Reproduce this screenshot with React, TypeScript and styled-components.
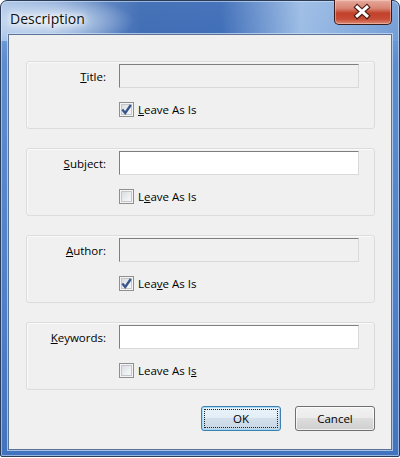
import React from 'react';
import styled, { createGlobalStyle } from 'styled-components';

const GlobalStyle = createGlobalStyle`
    html, body {
        margin: 0;
        padding: 0;
        background: #ffffff;
    }
    body {
        font-family: "Open Sans", "Noto Sans", "DejaVu Sans", sans-serif;
    }
`;

type Field = {
    label: string;
    labelKey: number;
    disabled: boolean;
    checked: boolean;
    leaveKey: number;
};

const fields: Field[] = [
    { label: 'Title:', labelKey: 0, disabled: true, checked: true, leaveKey: 0 },
    { label: 'Subject:', labelKey: 0, disabled: false, checked: false, leaveKey: 1 },
    { label: 'Author:', labelKey: 0, disabled: true, checked: true, leaveKey: 3 },
    { label: 'Keywords:', labelKey: 0, disabled: false, checked: false, leaveKey: 10 },
];

const Mnemonic = ({ text, index }: { text: string; index: number }) => (
    <>
        {text.slice(0, index)}
        <u>{text.charAt(index)}</u>
        {text.slice(index + 1)}
    </>
);

const CloseIcon = () => (
    <svg width="58" height="25" viewBox="0 0 58 25">
        <g strokeLinecap="square">
            <path d="M23 7 L33 16 M33 7 L23 16" stroke="#4a1a12" strokeWidth="5.5" />
            <path d="M23 7 L33 16 M33 7 L23 16" stroke="#ffffff" strokeWidth="3.2" />
        </g>
    </svg>
);

const CheckIcon = () => (
    <svg width="11" height="11" viewBox="0 0 11 11">
        <path d="M1.3 5.6 L4.2 9 L9.8 1" fill="none" stroke="#38558c" strokeWidth="2.3" />
    </svg>
);

const App = () => {
    return (
        <>
            <GlobalStyle />
            <Window>
                <TitleBar>
                    <Caption>Description</Caption>
                    <CloseButton><CloseIcon /></CloseButton>
                </TitleBar>
                <Client>
                    {fields.map((f) => (
                        <Group key={f.label}>
                            <FieldLabel><Mnemonic text={f.label} index={f.labelKey} /></FieldLabel>
                            <TextBox disabled={f.disabled} />
                            <span />
                            <CheckRow>
                                <CheckBox>{f.checked && <CheckIcon />}</CheckBox>
                                <CheckText><Mnemonic text="Leave As Is" index={f.leaveKey} /></CheckText>
                            </CheckRow>
                        </Group>
                    ))}
                    <ButtonRow>
                        <PushButton primary={true}><FocusRect>OK</FocusRect></PushButton>
                        <PushButton primary={false}><FocusRect>Cancel</FocusRect></PushButton>
                    </ButtonRow>
                </Client>
            </Window>
        </>
    );
};

const Window = styled.div`
    box-sizing: border-box;
    width: 400px;
    height: 457px;
    display: flex;
    flex-direction: column;
    border: 1px solid #2a3c57;
    border-radius: 7px 7px 2px 2px;
    background:
        radial-gradient(ellipse 85px 26px at 48px 20px, rgba(228, 238, 250, 0.95), rgba(228, 238, 250, 0) 100%),
        linear-gradient(to right, rgba(175, 200, 232, 0.85) 0px, rgba(50, 95, 170, 0.75) 140px, rgba(45, 92, 172, 0.7) 220px, rgba(165, 195, 232, 0.85) 300px, rgba(120, 160, 214, 0.5) 400px) 0 0 / 100% 40px no-repeat,
        linear-gradient(to bottom, #86acdd 0px, #5d8dd0 60px, #4e81c9 300px, #4273bf 100%);
    box-shadow: inset 0 0 0 1px rgba(220, 235, 250, 0.55);
`;

const TitleBar = styled.div`
    height: 33px;
    display: flex;
    justify-content: space-between;
    align-items: flex-start;
    flex-shrink: 0;
`;

const Caption = styled.div`
    padding: 8px 0 0 9px;
    font-size: 14px;
    color: #111;
    text-shadow: 0 0 8px #fff, 0 0 8px #fff, 0 0 4px rgba(255, 255, 255, 0.8);
`;

const CloseButton = styled.div`
    width: 58px;
    height: 25px;
    margin: -1px 7px 0 0;
    box-sizing: border-box;
    border: 1px solid #3b1a1a;
    border-top: none;
    border-radius: 0 0 5px 5px;
    background: linear-gradient(to bottom, #e6aa9d 0%, #d88472 35%, #c2412a 55%, #c84d36 80%, #dc8a74 100%);
    box-shadow: inset 0 0 0 1px rgba(255, 220, 210, 0.45);
    display: flex;
`;

const Client = styled.div`
    flex: 1;
    margin: 0 7px 6px 7px;
    border: 1px solid #5d7395;
    background: #f0f0f0;
    padding: 26px 16px 0 17px;
    display: flex;
    flex-direction: column;
    gap: 19px;
    box-shadow: 0 0 0 1px rgba(210, 226, 246, 0.7);
`;

const Group = styled.div`
    box-sizing: border-box;
    height: 68px;
    border: 1px solid #dcdcdc;
    border-radius: 3px;
    box-shadow: inset 1px 1px 0 #fafafa;
    display: grid;
    grid-template-columns: 79px 1fr;
    grid-template-rows: 24px 16px;
    column-gap: 13px;
    row-gap: 13px;
    padding: 2px 15px 0 0;
`;

const FieldLabel = styled.div`
    display: flex;
    align-items: center;
    justify-content: flex-end;
    font-size: 11.5px;
    color: #000;
`;

const TextBox = styled.input`
    box-sizing: border-box;
    width: 100%;
    height: 24px;
    margin: 0;
    border: 1px solid;
    border-color: #7f7f7f #d9d9d9 #d9d9d9 #7f7f7f;
    background: ${({ disabled }) => (disabled ? '#f0f0f0' : '#ffffff')};
    outline: none;
`;

const CheckRow = styled.div`
    display: flex;
    align-items: center;
    gap: 4px;
`;

const CheckBox = styled.span`
    box-sizing: border-box;
    width: 15px;
    height: 15px;
    border: 1px solid #8f8f8f;
    background: linear-gradient(135deg, #d4d7dc 0%, #eef0f2 60%, #fbfbfb 100%);
    box-shadow: inset 0 0 0 1px #f4f4f4, inset 0 0 0 2px #c3c6ca;
    display: flex;
    align-items: center;
    justify-content: center;
`;

const CheckText = styled.span`
    font-size: 11.5px;
    color: #000;
`;

const ButtonRow = styled.div`
    display: flex;
    justify-content: flex-end;
    gap: 14px;
    margin-top: -3px;
`;

const PushButton = styled.div<{ primary: boolean }>`
    box-sizing: border-box;
    width: 80px;
    height: 25px;
    border: 1px solid ${({ primary }) => (primary ? '#3c7fb1' : '#707070')};
    border-radius: 3px;
    background: ${({ primary }) =>
        primary
            ? 'linear-gradient(to bottom, #eaf3fa 0%, #e3edf6 50%, #d3e0ec 50%, #c7d6e4 100%)'
            : 'linear-gradient(to bottom, #f2f2f2 0%, #ebebeb 50%, #dddddd 50%, #cfcfcf 100%)'};
    box-shadow: inset 0 0 0 1px ${({ primary }) => (primary ? 'rgba(160, 215, 245, 0.9)' : 'rgba(255, 255, 255, 0.7)')};
    padding: 2px;
    display: flex;
    font-size: 11.5px;
    color: #000;
    --focus: ${({ primary }) => (primary ? '#222' : 'transparent')};
`;

const FocusRect = styled.div`
    flex: 1;
    border: 1px dotted var(--focus);
    display: flex;
    align-items: center;
    justify-content: center;
`;

export default App;
